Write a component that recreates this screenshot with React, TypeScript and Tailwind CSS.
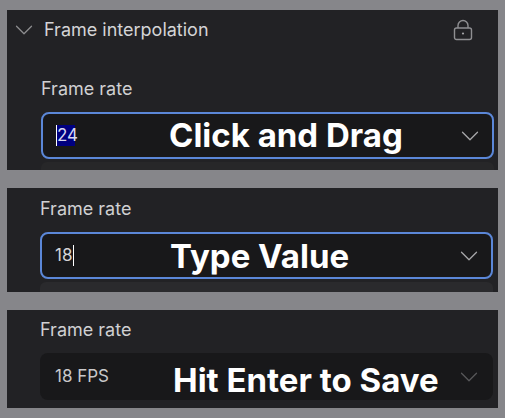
import { ChevronDown } from "lucide-react";

function Chevron({ className }: { className: string }) {
  return <ChevronDown size={30} strokeWidth={1} className={className} />;
}

function LockIcon() {
  return (
    <svg width="20" height="22" viewBox="0 0 20 22" fill="none" stroke="#8f8f92" strokeWidth="1.4">
      <path d="M5 9V6.5a5 5 0 0 1 10 0V9" />
      <rect x="1.5" y="9" width="17" height="11.5" rx="2" />
      <circle cx="10" cy="14.5" r="1.1" fill="#a5a5a8" stroke="none" />
    </svg>
  );
}

function Overlay({ text, className }: { text: string; className: string }) {
  return (
    <span className={`absolute text-[33px] leading-none font-bold text-white whitespace-nowrap ${className}`}>
      {text}
    </span>
  );
}

export default function App() {
  return (
    <div className="h-[418px] w-[505px] overflow-hidden bg-[#86868a] pt-[10px] pl-[7px] font-['Inter',sans-serif]">
      <div className="flex w-[491px] flex-col gap-[18px]">
        {/* Click and drag */}
        <section className="h-[160px] overflow-hidden bg-[#222225]">
          <div className="flex h-[40px] items-center pl-[2px] pr-[25px]">
            <Chevron className="text-[#8d8d90]" />
            <span className="ml-[5px] text-lg text-[#d4d4d6]">Frame interpolation</span>
            <div className="ml-auto">
              <LockIcon />
            </div>
          </div>
          <p className="mt-[29px] ml-[34px] text-[18px] leading-[20px] text-[#d0d0d2]">Frame rate</p>
          <div className="relative mt-[13px] ml-[34px] flex h-[47px] w-[453px] items-center rounded-lg border-2 border-[#5b87d8] bg-[#18181a] pl-[13px] pr-[7px]">
            <span className="h-[21px] w-[19px] border-l border-white bg-[#000080] text-[17px] leading-[21px] text-[#d8d8f0]">24</span>
            <Overlay text="Click and Drag" className="left-[126px] top-[5px]" />
            <Chevron className="ml-auto text-[#a8a8aa]" />
          </div>
          <div className="ml-[34px] mt-[3px] h-[10px] w-[453px] rounded-t-md bg-[#272729]" />
        </section>

        {/* Type value */}
        <section className="h-[104px] overflow-hidden bg-[#222225]">
          <p className="ml-[33px] pt-[11px] text-[18px] leading-[20px] text-[#d0d0d2]">Frame rate</p>
          <div className="relative mt-[13px] ml-[33px] flex h-[47px] w-[453px] items-center rounded-lg border-2 border-[#5b87d8] bg-[#18181a] pl-[13px] pr-[7px]">
            <span className="border-r border-white pr-px text-[17px] leading-[21px] text-[#d4d4d6]">18</span>
            <Overlay text="Type Value" className="left-[128px] top-[6px]" />
            <Chevron className="ml-auto text-[#a8a8aa]" />
          </div>
          <div className="ml-[33px] mt-[3px] h-[10px] w-[453px] rounded-t-md bg-[#2a2a2d]" />
        </section>

        {/* Hit enter to save */}
        <section className="h-[98px] bg-[#222225]">
          <p className="ml-[33px] pt-[10px] text-[18px] leading-[20px] text-[#d0d0d2]">Frame rate</p>
          <div className="relative mt-[13px] ml-[33px] flex h-[47px] w-[453px] items-center rounded-lg bg-[#18181a] pl-[15px] pr-[9px]">
            <span className="text-[17px] leading-[21px] text-[#c8c8ca]">18 FPS</span>
            <Overlay text="Hit Enter to Save" className="left-[133px] top-[11px]" />
            <Chevron className="ml-auto text-[#58585a]" />
          </div>
        </section>
      </div>
    </div>
  );
}
